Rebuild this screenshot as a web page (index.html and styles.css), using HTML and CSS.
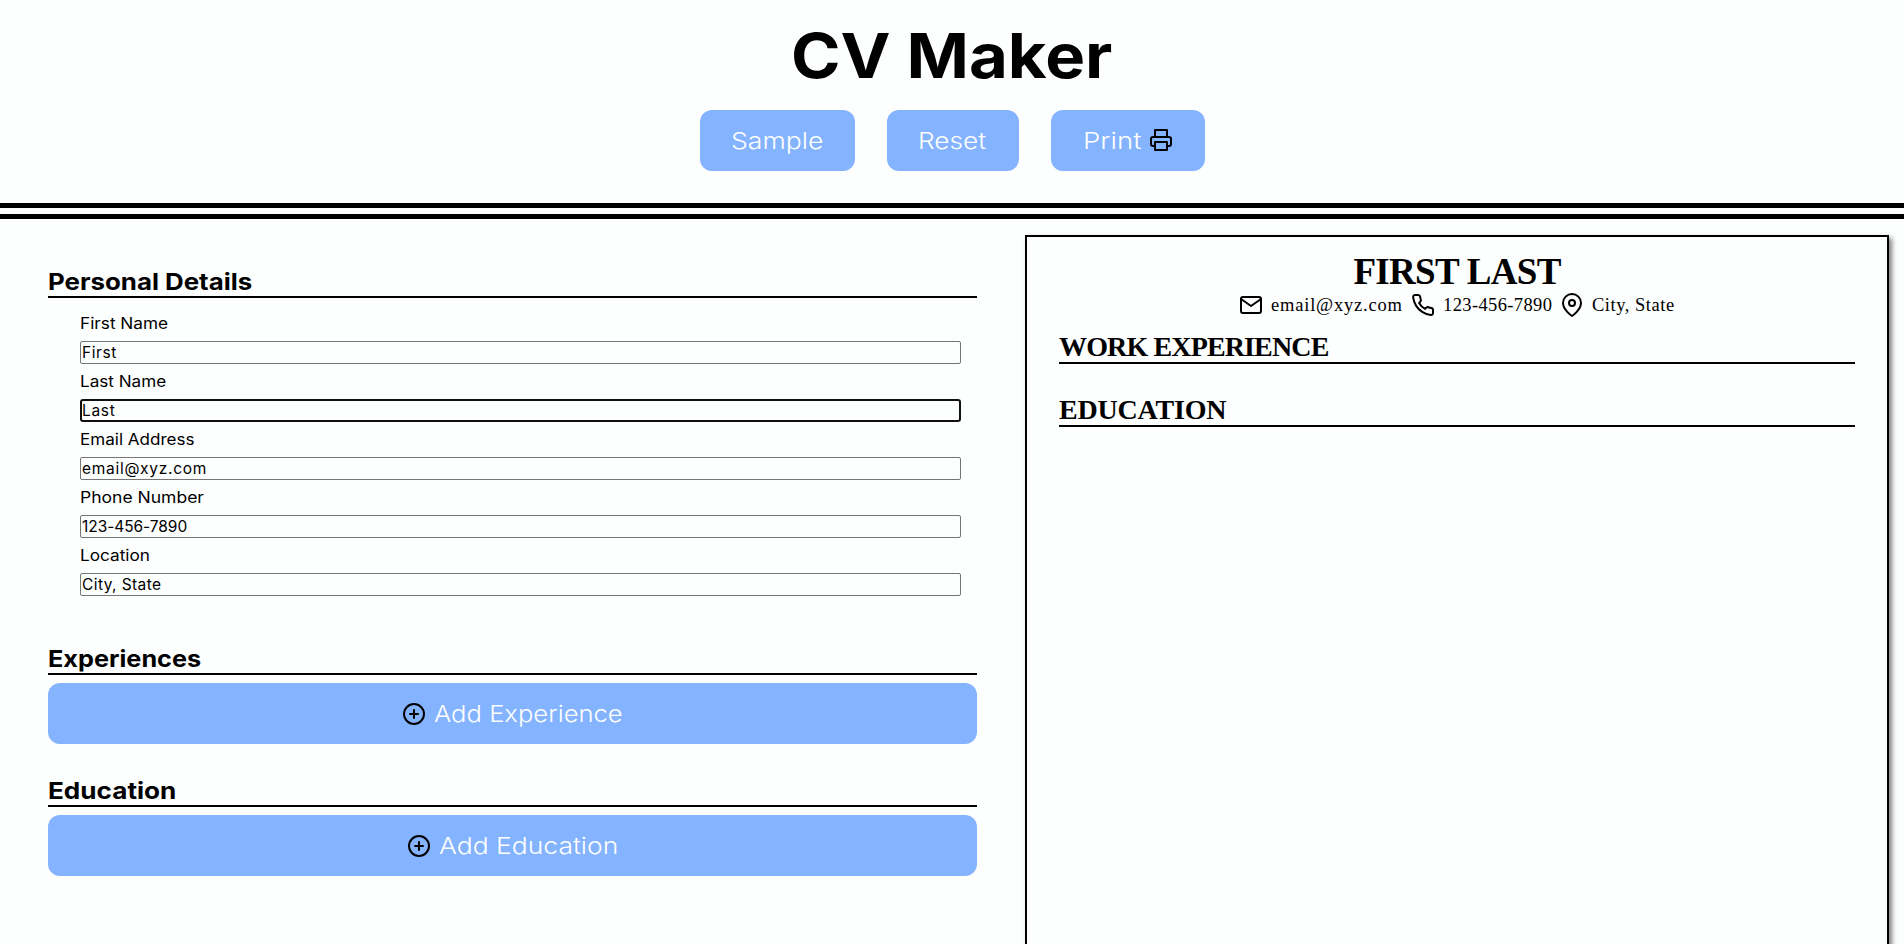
FILE: index.html
```html
<!DOCTYPE html>
<html lang="en">
<head>
<meta charset="utf-8">
<title>CV Maker</title>
<link rel="stylesheet" href="styles.css">
</head>
<body>
<header class="header">
  <h1 class="title"><span class="stretch t-title">CV Maker</span></h1>
  <div class="actions">
    <button class="btn btn-sample"><span class="stretch t-sample">Sample</span></button>
    <button class="btn btn-reset"><span class="stretch t-reset">Reset</span></button>
    <button class="btn btn-print"><span class="stretch t-print">Print</span><svg class="icon icon-print" viewBox="0 0 24 24"><path d="M6 9V2h12v7M6 18H4a2 2 0 0 1-2-2v-5a2 2 0 0 1 2-2h16a2 2 0 0 1 2 2v5a2 2 0 0 1-2 2h-2"/><rect x="6" y="14" width="12" height="8"/></svg></button>
  </div>
</header>
<main class="main">
  <section class="editor">
    <h2 class="heading"><span class="stretch h-personal">Personal Details</span></h2>
    <form class="form">
      <label class="label l1" for="first">First Name</label><input class="input i1" id="first" value="First">
      <label class="label l2" for="last">Last Name</label><input class="input i2 active" id="last" value="Last">
      <label class="label l3" for="email">Email Address</label><input class="input i3" id="email" value="email@xyz.com">
      <label class="label l4" for="phone">Phone Number</label><input class="input i4" id="phone" value="123-456-7890">
      <label class="label l5" for="location">Location</label><input class="input i5" id="location" value="City, State">
    </form>
    <h2 class="heading heading-exp"><span class="stretch h-exp">Experiences</span></h2>
    <button class="btn btn-wide"><svg class="icon" viewBox="0 0 24 24"><circle cx="12" cy="12" r="10"/><path d="M12 8v8M8 12h8"/></svg><span class="stretch t-addexp">Add Experience</span></button>
    <h2 class="heading heading-edu"><span class="stretch h-edu">Education</span></h2>
    <button class="btn btn-wide"><svg class="icon" viewBox="0 0 24 24"><circle cx="12" cy="12" r="10"/><path d="M12 8v8M8 12h8"/></svg><span class="stretch t-addedu">Add Education</span></button>
  </section>
  <section class="paper">
    <h2 class="name">FIRST LAST</h2>
    <div class="contact">
      <svg class="icon" viewBox="0 0 24 24"><path d="M4 4h16a2 2 0 0 1 2 2v12a2 2 0 0 1-2 2H4a2 2 0 0 1-2-2V6a2 2 0 0 1 2-2z"/><path d="M22 6l-10 7L2 6"/></svg><span class="c-email">email@xyz.com</span>
      <svg class="icon" viewBox="0 0 24 24"><path d="M22 16.92v3a2 2 0 0 1-2.18 2 19.79 19.79 0 0 1-8.63-3.07 19.5 19.5 0 0 1-6-6 19.79 19.79 0 0 1-3.07-8.67A2 2 0 0 1 4.11 2h3a2 2 0 0 1 2 1.72 12.84 12.84 0 0 0 .7 2.81 2 2 0 0 1-.45 2.11L8.09 9.91a16 16 0 0 0 6 6l1.27-1.27a2 2 0 0 1 2.11-.45 12.84 12.84 0 0 0 2.81.7A2 2 0 0 1 22 16.92z"/></svg><span class="c-phone">123-456-7890</span>
      <svg class="icon" viewBox="0 0 24 24"><path d="M21 10c0 7-9 13-9 13s-9-6-9-13a9 9 0 0 1 18 0z"/><circle cx="12" cy="10" r="3"/></svg><span class="c-city">City, State</span>
    </div>
    <h3 class="section s-work">WORK EXPERIENCE</h3>
    <h3 class="section s-edu">EDUCATION</h3>
  </section>
</main>
</body>
</html>
```
FILE: styles.css
```css
* { box-sizing: border-box; }
body { margin: 0; height: 944px; overflow: hidden; background: #fdfefe; color: #000; font-family: Inter, sans-serif; }
h1, h2, h3 { margin: 0; white-space: nowrap; }
.stretch { display: inline-block; transform-origin: 0 50%; }

.header { height: 219px; border-bottom: 16px double #000; display: flex; flex-direction: column; align-items: center; }
.title { height: 110px; padding-top: 16px; font-size: 62px; line-height: 79px; font-weight: 700; }
.t-title { transform: scaleX(1.081); transform-origin: 50% 50%; }
.actions { display: flex; gap: 32px; }

.btn { height: 61px; border: 0; border-radius: 12px; background: #84b3ff; color: #fdfefe; font: 300 23.2px/59px Inter, sans-serif; padding: 0; display: flex; flex: none; align-items: center; justify-content: center; white-space: nowrap; text-align: left; }
.btn .stretch { margin-top: 2px; }
.btn-sample { width: 155px; }
.btn-reset { width: 132px; }
.btn-print { width: 154px; justify-content: flex-start; padding-left: 32px; }
.btn-wide { width: 100%; gap: 8px; padding-right: 2px; }
.t-sample { transform: scaleX(1.149); transform-origin: 50% 50%; }
.t-reset { transform: scaleX(1.133); transform-origin: 50% 50%; }
.t-print { width: 66px; transform: scaleX(1.19); }
.t-addexp { width: 188px; transform: scaleX(1.104); }
.t-addedu { width: 178px; transform: scaleX(1.142); }

.icon { width: 24px; height: 24px; flex: none; fill: none; stroke: #000; stroke-width: 2; stroke-linecap: round; stroke-linejoin: round; }
.icon-print { margin-top: -1px; }

.main { height: 725px; display: flex; gap: 48px; overflow: hidden; }
.editor { width: 977px; padding: 47px 0 0 48px; }
.heading { height: 32px; border-bottom: 2px solid #000; font-size: 23.2px; line-height: 32px; font-weight: 700; margin-bottom: 8px; }
.heading-edu { margin-top: 31px; }
.h-personal { transform: scaleX(1.115); }
.h-exp { transform: scaleX(1.09); }
.h-edu { transform: scaleX(1.127); }

.form { display: flex; flex-direction: column; margin: 12px 16px 43px 32px; }
.label { align-self: flex-start; height: 31px; line-height: 27px; font-size: 15.5px; white-space: nowrap; transform-origin: 0 50%; }
.input { height: 23px; margin: 0 0 4px; padding: 0 1px; border: 1px solid #767676; border-radius: 2px; background: #fdfefe; color: #000; font: 15.5px/21px Inter, sans-serif; outline: 0; }
.active { border: 2px solid #101010; padding: 0; border-radius: 3px; }
.l1 { transform: scaleX(1.11); }
.l2 { transform: scaleX(1.104); }
.l3 { transform: scaleX(1.1); }
.l4 { transform: scaleX(1.13); }
.l5 { transform: scaleX(1.11); }
.i1 { letter-spacing: .6px; }
.i2 { letter-spacing: .7px; }
.i3 { letter-spacing: .72px; }
.i4 { letter-spacing: -.06px; }
.i5 { letter-spacing: .4px; }

.paper { width: 864px; height: 1100px; margin-top: 16px; border: 2px solid #000; box-shadow: 3px 3px 5px rgba(0, 0, 0, .5); padding: 14px 32px; font-family: "Liberation Serif", serif; }
.name { height: 40px; line-height: 42px; font-size: 37px; letter-spacing: -.7px; text-align: center; }
.contact { height: 28px; padding-left: 180px; display: flex; align-items: center; font-size: 18.5px; line-height: 28px; white-space: nowrap; }
.contact span { margin-left: 8px; }
.c-email { width: 140px; letter-spacing: .8px; }
.c-phone { width: 117px; letter-spacing: .38px; }
.c-city { letter-spacing: .52px; }
.section { height: 33px; border-bottom: 2px solid #000; font-size: 28px; line-height: 31px; }
.s-work { margin-top: 12px; letter-spacing: -.86px; }
.s-edu { margin-top: 30px; letter-spacing: -.2px; }
```
